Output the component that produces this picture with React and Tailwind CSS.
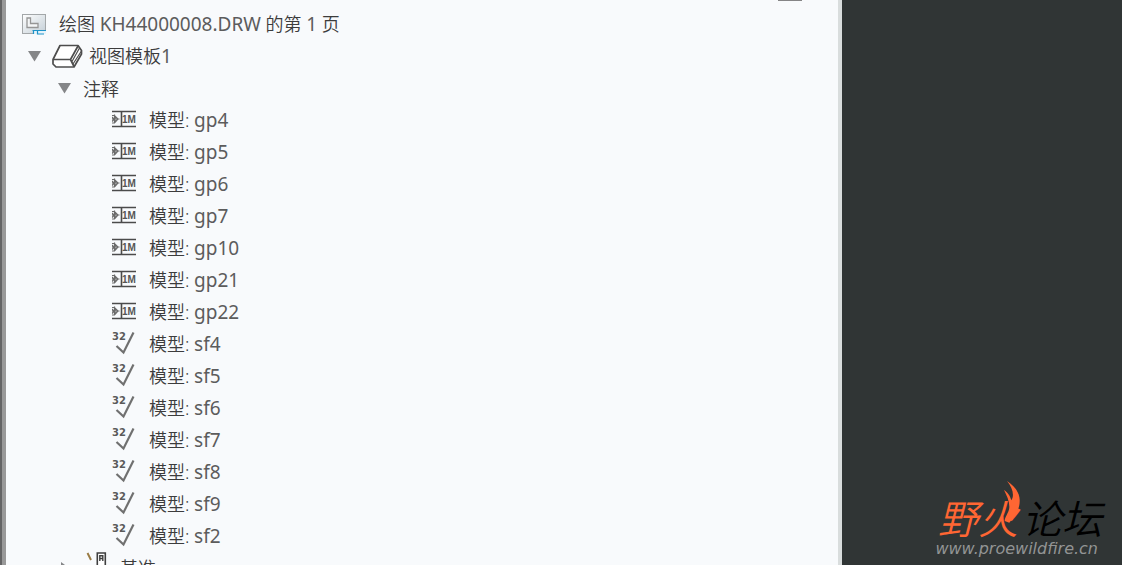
import React, { useState } from "react";

const annotations = [
  { name: "gp4", type: "tolerance" },
  { name: "gp5", type: "tolerance" },
  { name: "gp6", type: "tolerance" },
  { name: "gp7", type: "tolerance" },
  { name: "gp10", type: "tolerance" },
  { name: "gp21", type: "tolerance" },
  { name: "gp22", type: "tolerance" },
  { name: "sf4", type: "surface" },
  { name: "sf5", type: "surface" },
  { name: "sf6", type: "surface" },
  { name: "sf7", type: "surface" },
  { name: "sf8", type: "surface" },
  { name: "sf9", type: "surface" },
  { name: "sf2", type: "surface" },
];

const SheetIcon = () => (
  <svg className="h-6 w-6 shrink-0" viewBox="0 0 24 24" fill="none">
    <defs>
      <linearGradient id="sheet" x1="0" y1="0" x2="1" y2="1">
        <stop offset="0" stopColor="#ffffff" />
        <stop offset="1" stopColor="#c3ced6" />
      </linearGradient>
    </defs>
    <rect x="0.5" y="2.5" width="23" height="19" fill="url(#sheet)" stroke="#a3a7a9" />
    <path d="M5 6h3.500v5.500h7.500v4H5z" fill="#f4f6f7" stroke="#969696" strokeWidth="1.300" />
    <path d="M11 18.500h13V22H11z" fill="#e6f3fa" />
    <path d="M10.500 18.500H24M11.500 18.500V22M15.500 18.500V22H22" stroke="#1d93c9" strokeWidth="1.200" />
  </svg>
);

const ViewIcon = () => (
  <svg className="h-6 w-8 shrink-0" viewBox="0 0 32 24" fill="none" stroke="#4d4d4d" strokeWidth="1.700" strokeLinejoin="round">
    <path d="M8 1.500h18l3.500 5V10L22 23H4L1 20v-4.500z" fill="#ffffff" />
    <path d="M1 15.500h17.500l3.500 7M18.500 15.500L26 2" />
    <path d="M20 17.500L27.500 4M21 20l8.500-13" strokeWidth="1.200" />
  </svg>
);

const ToleranceIcon = () => (
  <svg className="h-6 w-6 shrink-0" viewBox="0 0 24 24" fill="none" stroke="#4b4b4b">
    <path d="M0 3.500h24M0 18.500h24M9.500 3v16" strokeWidth="1.600" />
    <path d="M0 7.500h2.500L6 11l-3.500 4H0M2.500 6.500v9M0 11h7.500M0 9l4 4.500M0 13.500L4 9" strokeWidth="1.200" stroke="#6b6b6b" />
    <text x="10" y="15" className="font-['Liberation_Sans'] text-[10px] font-bold" fill="#555555" stroke="none">
      1M
    </text>
  </svg>
);

const SurfaceIcon = () => (
  <svg className="h-6 w-6 shrink-0" viewBox="0 0 24 24" fill="none">
    <text x="0" y="8" className="font-['DejaVu_Sans'] text-[10px] font-bold" fill="#5a5a5a">
      32
    </text>
    <path d="M4.500 14l7 6.500L21.500 .500" stroke="#707070" strokeWidth="2.200" />
  </svg>
);

const DatumIcon = () => (
  <svg className="h-8 w-8 shrink-0" viewBox="0 0 32 32" fill="none">
    <path d="M7.500 1l3.500 7" stroke="#9a7b43" strokeWidth="2" />
    <path d="M17.300 24V1h8v23z" fill="#ffffff" stroke="#3f3f3f" strokeWidth="1.600" />
    <path d="M19.800 9V3.700h3V9M20 6.500h3" stroke="#3f3f3f" strokeWidth="1.400" />
  </svg>
);

const Toggle = ({ open, label, onClick }) => (
  <button
    type="button"
    aria-label={label}
    aria-expanded={open}
    onClick={onClick}
    className="flex h-6 w-4 shrink-0 items-center justify-center"
  >
    <svg className="h-3 w-3.5" viewBox="0 0 14 12" fill="#858688">
      {open ? <path d="M1 1h13L7.500 11.500z" /> : <path d="M4 0l8 6-8 6z" />}
    </svg>
  </button>
);

const Label = ({ children }) => <span className="pt-0.5 pl-px">{children}</span>;

const Latin = ({ children }) => (
  <span className="text-[19px] font-normal text-[#5c5c5c]">{children}</span>
);

const Watermark = () => (
  <div className="flex flex-col items-end pb-1.5">
    <div className="relative mr-5 flex gap-1 text-[40px] leading-[44px] font-[350] italic font-['Noto_Sans_CJK_SC',sans-serif]">
      <span className="text-[#ff6633]">野火</span>
      <span className="text-black">论坛</span>
      <svg className="absolute -top-4 left-16 h-11 w-5" viewBox="0 0 20 44" fill="#ff6633">
        <path d="M5 2C12 7 18 13 17.700 22c0 9-5 15-10.400 21.700L2.700 42c0-4 4-8 4.600-13.300C7.700 23 5 17 2 11c3 2 6 5 7.300 10.300C13 16 10 8 5 2z" />
      </svg>
    </div>
    <a
      href="http://www.proewildfire.cn"
      className="mr-6 text-base leading-5 italic text-[#929494] font-['DejaVu_Sans',sans-serif]"
    >
      www.proewildfire.cn
    </a>
  </div>
);

const App = () => {
  const [viewOpen, setViewOpen] = useState(true);
  const [notesOpen, setNotesOpen] = useState(true);
  const [datumOpen, setDatumOpen] = useState(false);

  return (
    <div className="flex h-screen overflow-hidden bg-[#303535] text-lg text-[#3c3c3c] font-['Noto_Sans','Noto_Sans_CJK_SC',sans-serif]">
      <div className="flex w-3/4 border-l-2 border-[#646465]">
        <main className="flex flex-1 items-start justify-between border-x-4 border-l-[#999999] border-r-[#d9dddd] bg-[#f8fafc]">
          <ul className="pt-2 pl-4 font-[350] whitespace-nowrap">
            <li>
              <div className="flex h-8 items-center gap-3">
                <SheetIcon />
                <Label>
                  绘图 <Latin>KH44000008.DRW</Latin> 的第 <Latin>1</Latin> 页
                </Label>
              </div>
              <ul>
                <li>
                  <div className="flex h-8 items-center pl-1">
                    <Toggle open={viewOpen} label="视图模板1" onClick={() => setViewOpen(!viewOpen)} />
                    <div className="flex items-center gap-1 pl-2.5">
                      <ViewIcon />
                      <Label>
                        视图模板<Latin>1</Latin>
                      </Label>
                    </div>
                  </div>
                  {viewOpen && (
                    <ul className="pl-[34px]">
                      <li>
                        <div className="flex h-8 items-center gap-2.5">
                          <Toggle open={notesOpen} label="注释" onClick={() => setNotesOpen(!notesOpen)} />
                          <Label>注释</Label>
                        </div>
                        {notesOpen && (
                          <ul className="pl-14">
                            {annotations.map((item) => (
                              <li key={item.name} className="flex h-8 items-center gap-3">
                                {item.type === "tolerance" ? <ToleranceIcon /> : <SurfaceIcon />}
                                <Label>
                                  模型: <Latin>{item.name}</Latin>
                                </Label>
                              </li>
                            ))}
                          </ul>
                        )}
                      </li>
                      <li className="flex h-8 items-center gap-2">
                        <Toggle open={datumOpen} label="基准" onClick={() => setDatumOpen(!datumOpen)} />
                        <DatumIcon />
                        <span>基准</span>
                      </li>
                    </ul>
                  )}
                </li>
              </ul>
            </li>
          </ul>
          <div className="mr-9 h-px w-6 bg-[#858586]" />
        </main>
      </div>
      <aside className="flex flex-1 items-end justify-end">
        <Watermark />
      </aside>
    </div>
  );
};

export default App;
